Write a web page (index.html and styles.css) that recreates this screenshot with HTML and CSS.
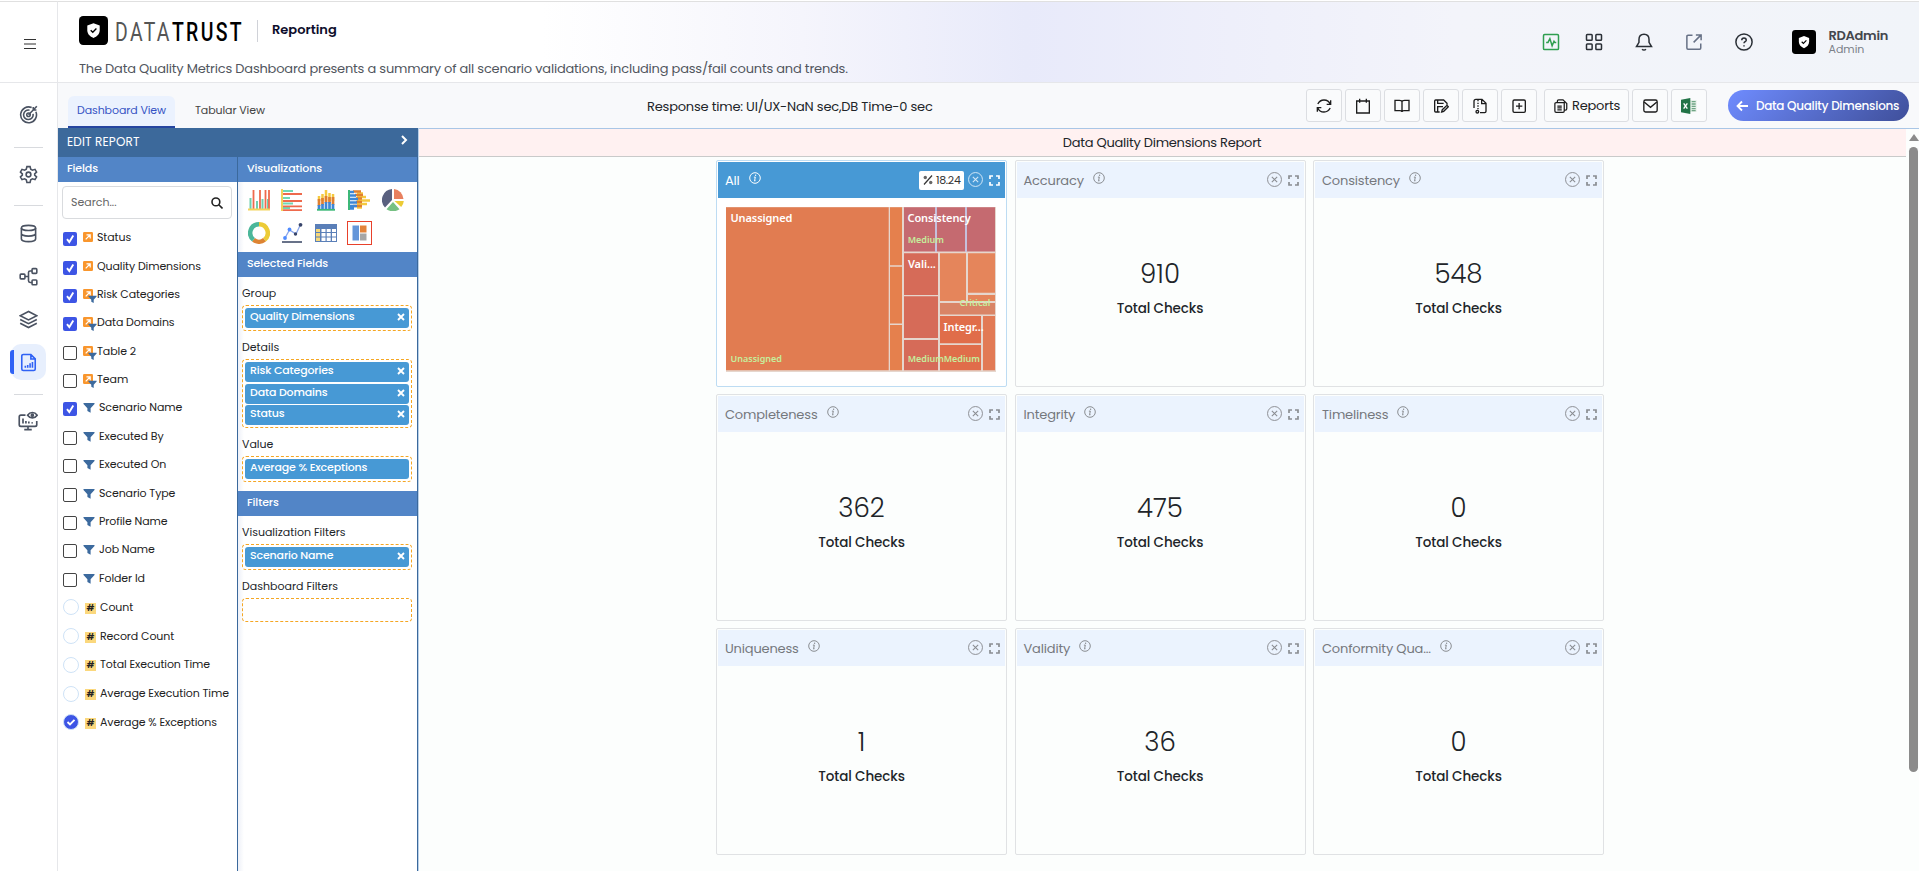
FILE: index.html
```
<!DOCTYPE html>
<html lang="en">
<head>
    <meta charset="UTF-8">
    <meta name="viewport" content="width=device-width, initial-scale=1.0">
    <title>Reporting - Data Quality Dimensions</title>
    <link rel="stylesheet" href="styles.css">
</head>
<body>

<!-- shared icons -->
<svg class="defs" width="0" height="0">
    <symbol id="i-shield" viewBox="0 0 28 28">
        <rect width="28" height="28" rx="4" fill="#000"/>
        <path d="M14 7l6 2.200v4.600c0 3.600-2.500 6-6 7.400-3.500-1.400-6-3.800-6-7.400V9.200z" fill="#fff"/>
        <path d="M11.300 13.700l2 2 3.500-3.700" fill="none" stroke="#000" stroke-width="1.300"/>
    </symbol>
    <symbol id="i-info" viewBox="0 0 12 12">
        <circle cx="6" cy="6" r="5.300" fill="none" stroke="currentColor" stroke-width="1"/>
        <path d="M6.300 5L5.600 8.800M4.900 5.200l1.400-.2M5.200 8.900l1.300-.2" fill="none" stroke="currentColor" stroke-width="1"/>
        <circle cx="6.600" cy="3.200" r=".7" fill="currentColor"/>
    </symbol>
    <symbol id="i-close" viewBox="0 0 14 14">
        <circle cx="7" cy="7" r="6.500" fill="none" stroke="currentColor" stroke-width=".9"/>
        <path d="M4.500 4.500l5 5M9.500 4.500l-5 5" stroke="currentColor" stroke-width="1"/>
    </symbol>
    <symbol id="i-expand" viewBox="0 0 11 11">
        <path d="M1 4V1h3M7 1h3v3M10 7v3H7M4 10H1V7" fill="none" stroke="currentColor" stroke-width="1.700"/>
    </symbol>
    <symbol id="i-funnel" viewBox="0 0 12 12">
        <path d="M.5 1h11v.9L7.600 6.200V10.800L4.400 9V6.200L.5 1.900z" fill="#3c6a9e"/>
    </symbol>
    <symbol id="i-link" viewBox="0 0 10 10">
        <rect width="10" height="10" rx="1.200" fill="#f9962d"/>
        <path d="M2.700 7.300L7 3M3.500 2.800H7.200V6.500" fill="none" stroke="#fff" stroke-width="1.200"/>
    </symbol>
    <symbol id="i-x" viewBox="0 0 8 8">
        <path d="M1 1l6 6M7 1L1 7" stroke="#fff" stroke-width="1.900"/>
    </symbol>
</svg>

<aside class="sidebar">
    <div class="menu-toggle">
        <svg width="14" height="12" viewBox="0 0 14 12" stroke="#333" stroke-width="1.200"><path d="M1 1.500h12M1 6h12M1 10.500h12"/></svg>
    </div>
    <nav class="side-nav">
        <a class="side-item first">
            <svg width="19" height="19" viewBox="0 0 24 24"><path d="M21.300 8.500A10 10 0 1 1 16 3.200M17.700 11.200A6 6 0 1 1 13.300 6.600"/><circle cx="12" cy="12.300" r="2.200"/><path d="M12 12.300l6-6M18 2.500v3.800h4M18 6.300L22.500 1.500"/></svg>
        </a>
        <hr>
        <a class="side-item">
            <svg width="19" height="19" viewBox="0 0 24 24"><path d="M10 2h4l.8 3.200 2.200 1.300 3.200-1 2 3.500-2.400 2.200v1.600l2.400 2.200-2 3.500-3.200-1-2.200 1.300L14 22h-4l-.8-3.200L7 17.500l-3.200 1-2-3.500 2.400-2.200v-1.600L1.800 9l2-3.500 3.200 1 2.200-1.300z"/><circle cx="12" cy="12" r="3"/></svg>
        </a>
        <hr>
        <a class="side-item db">
            <svg width="19" height="19" viewBox="0 0 24 24"><ellipse cx="12" cy="5" rx="9" ry="3.300"/><path d="M3 5v14c0 1.800 4 3.300 9 3.300s9-1.500 9-3.300V5M3 12c0 1.800 4 3.300 9 3.300s9-1.500 9-3.300"/></svg>
        </a>
        <a class="side-item">
            <svg width="19" height="19" viewBox="0 0 24 24"><rect x="1.500" y="9" width="6" height="6" rx="1"/><rect x="16.500" y="2" width="6" height="6" rx="1"/><rect x="16.500" y="16.500" width="6" height="6" rx="1"/><path d="M7.500 12H12M16.500 5h-2.500a2 2 0 0 0-2 2v10.500a2 2 0 0 0 2 2h2.500"/></svg>
        </a>
        <a class="side-item">
            <svg width="19" height="19" viewBox="0 0 24 24"><path d="M12 1.800L1.500 7.200 12 12.500l10.500-5.300zM1.500 12L12 17.300 22.500 12M1.500 16.800L12 22.200l10.500-5.400"/></svg>
        </a>
        <a class="side-item active">
            <svg width="19" height="19" viewBox="0 0 24 24"><path d="M15 1.800H5.500a2 2 0 0 0-2 2v16.400a2 2 0 0 0 2 2h13a2 2 0 0 0 2-2V7.500zM15 1.800v5.700h5.500M8 16v2.500M11 15v3.500M14 13v5.500M17 11.500v7"/></svg>
        </a>
        <hr>
        <a class="side-item last">
            <svg width="20" height="20" viewBox="0 0 24 24"><path d="M9 5H3.500a2 2 0 0 0-2 2v9.500a2 2 0 0 0 2 2h17a2 2 0 0 0 2-2V12M12 18.500V22M7.500 22.300h9M6 15V9M9.500 15v-3M13 15v-2.500M17 15v-1.500"/><path d="M11.500 5c3-4.300 8.500-4.300 11.500 0-3 4.300-8.500 4.300-11.500 0z"/><circle cx="17.200" cy="5" r="1.200"/></svg>
        </a>
    </nav>
</aside>

<div class="page">
    <header class="topbar">
        <div class="brand">
            <div class="brand-row">
                <svg width="29" height="29"><use href="#i-shield"/></svg>
                <svg class="wordmark" width="136" height="34">
                    <text x="1" y="27" textLength="129" lengthAdjust="spacingAndGlyphs"><tspan class="word-light">DATA</tspan><tspan class="word-dark">TRUST</tspan></text>
                </svg>
                <span class="module">Reporting</span>
            </div>
            <p class="description">The Data Quality Metrics Dashboard presents a summary of all scenario validations, including pass/fail counts and trends.</p>
        </div>
        <div class="top-icons">
            <svg class="health" width="18" height="18" viewBox="0 0 24 24"><rect x="2" y="2" width="20" height="20" rx="1.500"/><path d="M5.500 12.500H8l2.500-5 3 9.500 2.500-6 1 1.500h2"/></svg>
            <svg width="18" height="18" viewBox="0 0 24 24"><rect x="2" y="2" width="7.500" height="7.500" rx="1"/><rect x="14.500" y="2" width="7.500" height="7.500" rx="1"/><rect x="2" y="14.500" width="7.500" height="7.500" rx="1"/><rect x="14.500" y="14.500" width="7.500" height="7.500" rx="1"/></svg>
            <svg width="18" height="18" viewBox="0 0 24 24"><path d="M12 1.500c-4.300 0-6.700 3-6.700 7v4L2 18h20l-3.300-5.500v-4c0-4-2.400-7-6.700-7zM9.500 21.500c1 1.500 4 1.500 5 0"/></svg>
            <svg class="muted" width="18" height="18" viewBox="0 0 24 24"><path d="M10 3H4a1.500 1.500 0 0 0-1.500 1.500v15.500A1.500 1.500 0 0 0 4 21.500h15.500A1.500 1.500 0 0 0 21 20v-6M14.500 2.500H21.500V9.500M21.500 2.500L11.500 12.500"/></svg>
            <svg width="18" height="18" viewBox="0 0 24 24"><circle cx="12" cy="12" r="10.800"/><path d="M9 9.500c0-4 6-4 6 0 0 2-3 2.200-3 4.300M12 16.300v1.700"/></svg>
            <div class="user">
                <svg width="24" height="24"><use href="#i-shield"/></svg>
                <div>
                    <strong>RDAdmin</strong>
                    <small>Admin</small>
                </div>
            </div>
        </div>
    </header>

    <div class="toolbar">
        <div class="tabs">
            <a class="tab active">Dashboard View</a>
            <a class="tab">Tabular View</a>
        </div>
        <div class="response">Response time: UI/UX-NaN sec,DB Time-0 sec</div>
        <div class="tools">
            <button class="tool"><svg width="16" height="16" viewBox="0 0 24 24"><path d="M21.500 9.500C20 5.500 16.500 3 12 3 7.500 3 4.500 5.500 2.700 9M22 3.500v6h-6M2.500 14.500C4 18.500 7.500 21 12 21c4.500 0 7.500-2.500 9.300-6M2 20.500v-6h6"/></svg></button>
            <button class="tool"><svg width="16" height="16" viewBox="0 0 24 24"><path d="M2.500 4.500h19v18h-19zM7 1v6M17 1v6"/></svg></button>
            <button class="tool"><svg width="16" height="16" viewBox="0 0 24 24"><path d="M12 5.500C12 4.500 10 3.500 8 3.500H1.500v15.500H9c2 0 3 1 3 2 0-1 1-2 3-2h7.500V3.500H16c-2 0-4 1-4 2zM12 5.500V21"/></svg></button>
            <button class="tool"><svg width="16" height="16" viewBox="0 0 24 24"><path d="M10 21H4a1.500 1.500 0 0 1-1.500-1.500v-15A1.500 1.500 0 0 1 4 3h12l5 5v2M7 3v5h9M7 21v-8h8M13 21l1-3.500 7-6.500 2 2.200-7 6.800z"/></svg></button>
            <button class="tool"><svg width="16" height="16" viewBox="0 0 24 24"><path d="M12 22h7a2 2 0 0 0 2-2V8l-6-6H6a3 3 0 0 0-3 3v10M14.500 2v6.500H21M9 3v2M9 7v2M9 11v2M9 15v2"/><circle cx="8" cy="20.500" r="2"/></svg></button>
            <button class="tool"><svg width="16" height="16" viewBox="0 0 24 24"><rect x="3" y="3" width="18.500" height="18.500" rx="2"/><path d="M12.200 7.500v9.500M7.500 12.200H17"/></svg></button>
            <button class="tool reports"><svg width="15" height="16" viewBox="0 0 24 24"><path d="M18 6.500V20a2 2 0 0 1-2 2H5a2 2 0 0 1-2-2V8.500a2 2 0 0 1 2-2h8zM7 6V4a2 2 0 0 1 2-2h7l6 6v8.500a2 2 0 0 1-2 2h-1.500M7 12h7M7 15h7M7 18h7"/></svg>Reports</button>
            <button class="tool"><svg width="17" height="16" viewBox="0 0 24 24"><rect x="2" y="3" width="20" height="18" rx="2.500"/><path d="M2.500 6l9.500 8 9.500-8"/></svg></button>
            <button class="tool"><svg class="excel" width="16" height="16" viewBox="0 0 24 24"><rect x="11" y="3" width="12.500" height="18" fill="#e6f0e9"/><path d="M16 5.500h6M16 9h6M16 12.500h6M16 16h6M16 19h6" stroke="#6fa585" stroke-width="2"/><path d="M14 0v24L0 21.500v-19z" fill="#217346"/><path d="M4 8l5.500 8M9.500 8L4 16" stroke="#fff" stroke-width="2"/></svg></button>
            <button class="back"><svg width="13" height="12" viewBox="0 0 13 12"><path d="M6 1.500L1.500 6 6 10.500M1.500 6H12" fill="none" stroke="#fff" stroke-width="1.800"/></svg>Data Quality Dimensions</button>
        </div>
    </div>

    <div class="workspace">
        <section class="edit-panel">
            <div class="edit-title">EDIT REPORT
                <svg width="8" height="10" viewBox="0 0 8 10"><path d="M2 1l4 4-4 4" fill="none" stroke="#fff" stroke-width="2"/></svg>
            </div>
            <div class="edit-cols">
                <div class="fields-col">
                    <h3>Fields</h3>
                    <div class="search">Search...
                        <svg width="12" height="12" viewBox="0 0 12 12" fill="none" stroke="#222" stroke-width="1.600"><circle cx="4.900" cy="4.900" r="3.900"/><path d="M7.800 7.800L11.500 11.500"/></svg>
                    </div>
                    <ul class="fields" id="fields"></ul>
                    <ul class="measures" id="measures"></ul>
                </div>
                <div class="vis-col">
                    <h3>Visualizations</h3>
                    <div class="charts">
                        <svg viewBox="0 0 22 22"><path d="M2.500 9v11M9 12v8M14.500 10v10M20 10v10" stroke="#6fcfae" stroke-width="2"/><path d="M5.500 1v19M12 1v19M17.500 1v19M21 1v19" stroke="#ee6a4d" stroke-width="1.800"/><path d="M0 20.500h22" stroke="#f2d35b" stroke-width="2"/></svg>
                        <svg viewBox="0 0 22 22"><path d="M2 2h10M2 9h7M2 14.500h10M2 19h7" stroke="#6fd6b4" stroke-width="2"/><path d="M2 5h19M2 12h19M2 17.300h19M2 21.200h19" stroke="#ee6a4d" stroke-width="1.800"/><path d="M1 0v22" stroke="#f2d35b" stroke-width="2"/></svg>
                        <svg viewBox="0 0 22 22"><path d="M4 7v5M7.500 5v7M11 1v11M14.500 4v8M18 5v7" stroke="#f5c93f" stroke-width="2.500"/><path d="M4 10v7M7.500 9v7M11 7v7M14.500 8v6M18 8v8" stroke="#e07f2f" stroke-width="2.700"/><path d="M4 16v4M7.500 15v5M11 13v7M14.500 13v7M18 15v5" stroke="#3d86d6" stroke-width="2.700"/><path d="M2 20.800h18" stroke="#3cb878" stroke-width="1.800"/></svg>
                        <svg viewBox="0 0 22 22"><path d="M9 4.500h6M9 8h9M9 11.500h13M9 15h10M9 18.500h5" stroke="#f5c93f" stroke-width="2.500"/><path d="M5 2.500h8M7 6h8M8 9.500h6M8 13h6M5 17h9" stroke="#e07f2f" stroke-width="2.700"/><path d="M2 3h4M2 6.500h6M2 10h8M2 13.500h7M2 17h7M2 19.500h4" stroke="#3d86d6" stroke-width="2.500"/><path d="M1 1v20" stroke="#3cb878" stroke-width="2"/></svg>
                        <svg viewBox="0 0 22 22"><path d="M10 11L10 0A11 11 0 0 0 3 18.500z" fill="#59607f"/><path d="M12 10V0a11 11 0 0 1 9.500 10z" fill="#e8805f"/><path d="M12.500 12h9.300a10 10 0 0 1-2.600 6z" fill="#eccb36"/><path d="M11 13l6.500 7.200a11 11 0 0 1-13 0z" fill="#76c083"/></svg>
                        <svg viewBox="0 0 22 22" fill="none" stroke-width="4.500"><path d="M11 2.300A8.700 8.700 0 0 1 16.500 17.800" stroke="#eccb36"/><path d="M16.500 17.800A8.700 8.700 0 0 1 5.500 17.800" stroke="#dd8433"/><path d="M5.500 17.800A8.700 8.700 0 0 1 11 2.300" stroke="#4bb79a"/></svg>
                        <svg viewBox="0 0 22 22"><path d="M4 16L8.500 8l6.500 4L19.500 2.500" fill="none" stroke="#8aa6ea" stroke-width="1.300"/><circle cx="4" cy="16" r="1.900" fill="#4f8bff"/><circle cx="8.500" cy="7.500" r="1.900" fill="#4f8bff"/><circle cx="14.500" cy="12" r="1.700" fill="#38456b"/><circle cx="19.500" cy="2.800" r="1.900" fill="#38456b"/><path d="M1 20h20" stroke="#4d5974" stroke-width="1.700"/></svg>
                        <svg viewBox="0 0 22 22"><rect y="2" width="22" height="18" fill="#5a7fb8"/><path fill="#f6d879" d="M1 7h4v3H1zM1 11h4v3.500H1zM1 15.500h4v3.500H1z"/><path fill="#fff" d="M6.500 7h4v3h-4zM11.700 7h4v3h-4zM17 7h4v3h-4zM6.500 11h4v3.500h-4zM11.700 11h4v3.500h-4zM17 11h4v3.500h-4zM6.500 15.500h4v3.500h-4zM11.700 15.500h4v3.500h-4zM17 15.500h4v3.500h-4z"/></svg>
                        <svg class="picked" viewBox="0 0 23 22"><path fill="#6596d9" d="M4.500 3.500h6.500v15H4.500z"/><path fill="#e3833a" d="M12 3.500h6.500v7H12z"/><path fill="#a6a6a6" d="M12 11.500h6.500v7H12z"/></svg>
                    </div>
                    <h3>Selected Fields</h3>
                    <div class="slots">
                        <label>Group</label>
                        <div class="drop"><span class="chip">Quality Dimensions<svg><use href="#i-x"/></svg></span></div>
                        <label>Details</label>
                        <div class="drop"><span class="chip">Risk Categories<svg><use href="#i-x"/></svg></span><span class="chip">Data Domains<svg><use href="#i-x"/></svg></span><span class="chip">Status<svg><use href="#i-x"/></svg></span></div>
                        <label>Value</label>
                        <div class="drop"><span class="chip">Average % Exceptions</span></div>
                    </div>
                    <h3>Filters</h3>
                    <div class="slots">
                        <label>Visualization Filters</label>
                        <div class="drop"><span class="chip">Scenario Name<svg><use href="#i-x"/></svg></span></div>
                        <label>Dashboard Filters</label>
                        <div class="drop empty"></div>
                    </div>
                </div>
            </div>
        </section>

        <main class="report">
            <h2>Data Quality Dimensions Report</h2>
            <div class="cards" id="cards">
                <article class="card selected">
                    <div class="card-head">
                        <span class="card-title">All</span>
                        <svg class="info" width="12" height="12"><use href="#i-info"/></svg>
                        <span class="score"><svg width="10" height="10" viewBox="0 0 10 10"><path d="M1 9.500L9 .5" stroke="#333" stroke-width="1.200"/><circle cx="2.300" cy="2.500" r="1.700" fill="#666"/><circle cx="7.700" cy="7.500" r="1.700" fill="#666"/></svg>18.24</span>
                        <svg class="close" width="15" height="15"><use href="#i-close"/></svg>
                        <svg class="expand" width="11" height="11"><use href="#i-expand"/></svg>
                    </div>
                    <svg class="treemap" width="270" height="165" viewBox="0 0 270 165">
                        <rect width="270" height="165" fill="#e6d6cd"/>
                        <path fill="#c6c0dc" d="M209 0h2v45h-2zM239 0h2v45h-2z"/>
                        <path fill="#e17c51" d="M0 .3h162.700V163.300H0z"/>
                        <path fill="#e5804d" d="M164 .3h12V58.300H164zM164 59.700h12V116.500H164zM164 118h12V163.300H164z"/>
                        <path fill="#c56a70" d="M178 .3h31V44.500H178zM211 .3h28V44.500H211zM241 .3h28V44.500H241z"/>
                        <path fill="#d66b58" d="M178 46.300h34V88H178zM178 89.300h34V131H178zM178 133h34V163.300H178z"/>
                        <path fill="#e5855b" d="M214 46.300h26V94H214zM242 46.300h27V85.700H242zM242 88h27V94H242z"/>
                        <path fill="#d98466" d="M214 96h55V107.500H214z"/>
                        <path fill="#e06d4a" d="M214 109h41V136.300H214zM214 138h41V163.300H214z"/>
                        <path fill="#e27a55" d="M257 109h12V163.300H257z"/>
                        <g class="group-label">
                            <text x="4.500" y="14.700">Unassigned</text>
                            <text x="181.500" y="14.700">Consistency</text>
                            <text x="182" y="60.700">Vali...</text>
                            <text x="217.500" y="123.700">Integr...</text>
                        </g>
                        <g class="leaf-label">
                            <text x="4.500" y="155">Unassigned</text>
                            <text x="181.700" y="36">Medium</text>
                            <text x="233.500" y="99">Critical</text>
                            <text x="181.700" y="155">Medium</text>
                            <text x="217.700" y="155">Medium</text>
                        </g>
                    </svg>
                </article>
            </div>
        </main>
        <div class="scroll"><i></i><span></span></div>
    </div>
</div>

<script>
    const fields = [
        ["Status", "link", true],
        ["Quality Dimensions", "link", true],
        ["Risk Categories", "both", true],
        ["Data Domains", "both", true],
        ["Table 2", "both", false],
        ["Team", "both", false],
        ["Scenario Name", "funnel", true],
        ["Executed By", "funnel", false],
        ["Executed On", "funnel", false],
        ["Scenario Type", "funnel", false],
        ["Profile Name", "funnel", false],
        ["Job Name", "funnel", false],
        ["Folder Id", "funnel", false]
    ];
    const measures = ["Count", "Record Count", "Total Execution Time", "Average Execution Time", "Average % Exceptions"];
    const cards = [
        ["Accuracy", 910], ["Consistency", 548], ["Completeness", 362], ["Integrity", 475],
        ["Timeliness", 0], ["Uniqueness", 1], ["Validity", 36], ["Conformity Qua...", 0]
    ];
    const tick = '<svg viewBox="0 0 14 14"><path d="M4 7.200l2.300 2.800L10.300 3.500" fill="none" stroke="#fff" stroke-width="1.900"/></svg>';

    document.getElementById("fields").innerHTML = fields.map(([name, kind, on]) => {
        let icon = "";
        if (kind !== "funnel") icon += '<svg class="link-icon"><use href="#i-link"/></svg>';
        if (kind !== "link") icon += '<svg class="funnel-icon"><use href="#i-funnel"/></svg>';
        return `<li class="${kind}"><span class="box ${on ? "on" : ""}">${on ? tick : ""}</span><span class="kind">${icon}</span><span class="name">${name}</span></li>`;
    }).join("");

    document.getElementById("measures").innerHTML = measures.map((name, i) => {
        const on = i === measures.length - 1;
        return `<li><span class="dot ${on ? "on" : ""}">${on ? '<svg viewBox="0 0 14 14"><path d="M3.500 7l2.500 2.500L10.500 4.800" fill="none" stroke="#fff" stroke-width="1.900"/></svg>' : ""}</span><span class="hash">#</span><span class="name">${name}</span></li>`;
    }).join("");

    document.getElementById("cards").insertAdjacentHTML("beforeend", cards.map(([name, total]) => `
        <article class="card">
            <div class="card-head">
                <span class="card-title">${name}</span>
                <svg class="info" width="12" height="12"><use href="#i-info"/></svg>
                <svg class="close" width="15" height="15"><use href="#i-close"/></svg>
                <svg class="expand" width="11" height="11"><use href="#i-expand"/></svg>
            </div>
            <div class="total">${total}</div>
            <div class="caption">Total Checks</div>
        </article>`).join(""));
</script>

</body>
</html>
```
FILE: styles.css
```
* {
    box-sizing: border-box;
}
body {
    margin: 0;
    height: 871px;
    display: flex;
    overflow: hidden;
    border-top: 1px solid #fff;
    font-family: Poppins, Inter, "Open Sans", sans-serif;
    font-size: 14px;
    color: #212529;
    background-color: #fff;
}
h2, h3, p, ul {
    margin: 0;
    padding: 0;
    font-weight: 400;
}
svg {
    display: block;
    flex-shrink: 0;
}
.defs {
    position: absolute;
}

/* left rail */
.sidebar {
    width: 58px;
    border-top: 1px solid #e0e0e0;
    border-right: 1px solid #e6e7ea;
    flex-shrink: 0;
}
.menu-toggle {
    height: 81px;
    padding-top: 36px;
    padding-left: 23px;
    border-bottom: 1px solid #e6e7ea;
}
.side-nav {
    display: flex;
    flex-direction: column;
    align-items: center;
}
.side-nav hr {
    width: 29px;
    margin: 11px 0 6px;
    border: 0;
    border-top: 1px solid #d8dade;
}
.side-item {
    display: flex;
    align-items: center;
    justify-content: center;
    width: 35px;
    height: 40px;
    margin-right: 1px;
}
.side-item svg {
    fill: none;
    stroke: #4a5261;
    stroke-width: 2;
}
.side-item.first {
    height: 43px;
    margin-top: 10px;
}
.side-item.db {
    height: 43px;
}
.side-item + .side-item {
    height: 43px;
}
.side-item + .side-item.active {
    position: relative;
    height: 36px;
    margin: 3px 0 3px;
    background-color: #e7effd;
    border-radius: 10px;
}
.side-item.active::before {
    content: "";
    position: absolute;
    left: -1px;
    top: 6px;
    width: 4px;
    height: 24px;
    border-radius: 3px 0 0 3px;
    background-color: #2f62f5;
}
.side-item.active svg {
    stroke: #2f62f5;
}

/* header */
.page {
    flex: 1;
    display: flex;
    flex-direction: column;
    min-width: 0;
}
.topbar {
    height: 82px;
    display: flex;
    justify-content: space-between;
    border-top: 1px solid #e0e0e0;
    border-bottom: 1px solid #e6e7ea;
    background: linear-gradient(90deg, #fff 26%, #f5f5fc 40%, #e8eafa 52%, #eeeffa 63%, #f3f4fa 75%, #f1f4f9 100%);
}
.brand {
    padding: 14px 0 0 21px;
}
.brand-row {
    display: flex;
    align-items: center;
    height: 29px;
}
.wordmark {
    margin: 0 7px 0 6px;
    overflow: visible;
    font-family: Roboto, sans-serif;
    font-size: 25px;
    letter-spacing: 3px;
}
.word-light {
    fill: #555;
}
.word-dark {
    fill: #000;
    font-weight: 500;
}
.module {
    height: 22px;
    padding-left: 14px;
    border-left: 1px solid #d0d2d8;
    font-size: 13px;
    line-height: 20px;
    font-weight: 600;
    color: #0d0d2b;
}
.description {
    margin-top: 14px;
    font-size: 13px;
    line-height: 20px;
    color: #51565e;
    letter-spacing: -.2px;
}
.top-icons {
    display: flex;
    align-items: center;
    gap: 32px;
    padding-right: 31px;
}
.top-icons > svg {
    fill: none;
    stroke: #2a2f36;
    stroke-width: 2;
}
.top-icons > .health {
    margin-right: -7px;
    stroke: #2f9e4f;
}
.top-icons > .muted {
    stroke: #667085;
}
.user {
    display: flex;
    align-items: center;
    gap: 12px;
    margin-left: 7px;
}
.user strong, .user small {
    display: block;
    line-height: 14px;
    font-size: 13px;
    font-weight: 600;
    letter-spacing: -.3px;
    color: #44474d;
}
.user small {
    font-size: 11px;
    line-height: 12px;
    font-weight: 400;
    letter-spacing: 0;
    color: #7b8088;
}

/* toolbar */
.toolbar {
    position: relative;
    display: flex;
    justify-content: space-between;
    height: 46px;
    padding: 6px 10px 0;
    background-color: #f8f9fb;
    border-bottom: 1px solid #a9c6e6;
}
.tabs {
    display: flex;
    padding-top: 7px;
}
.tab {
    height: 32px;
    padding: 0 20px;
    font-size: 11px;
    line-height: 29px;
    letter-spacing: -.1px;
    color: #444;
}
.tab.active {
    width: 107px;
    padding: 0;
    text-align: center;
    border-radius: 6px 6px 0 0;
    border-bottom: 2px solid #2545a0;
    background-color: #ebf2fe;
    color: #3653c4;
}
.response {
    position: absolute;
    left: 589px;
    top: 15px;
    font-size: 13px;
    line-height: 18px;
    letter-spacing: -.2px;
}
.tools {
    display: flex;
    gap: 3px;
}
.tool {
    display: flex;
    align-items: center;
    justify-content: center;
    width: 36px;
    height: 33px;
    padding: 0;
    border: 1px solid #dcdee2;
    border-radius: 3px;
    background-color: #fafbfc;
    font: inherit;
    font-size: 13px;
    letter-spacing: -.2px;
    color: #222;
}
.tool svg {
    fill: none;
    stroke: #1c1c1c;
    stroke-width: 2;
}
.tool .excel {
    stroke: none;
}
.tool.reports {
    width: 85px;
    gap: 4px;
    margin-left: 4px;
}
.back {
    display: flex;
    align-items: center;
    gap: 7px;
    width: 181px;
    height: 31px;
    margin: 1px 0 0 18px;
    padding: 0 0 0 8px;
    border: 0;
    border-radius: 16px;
    background: linear-gradient(135deg, #6f8cff, #3f4f9a);
    font: inherit;
    font-size: 12px;
    font-weight: 500;
    letter-spacing: -.27px;
    color: #fff;
    white-space: nowrap;
}

/* edit report panel */
.workspace {
    flex: 1;
    display: flex;
    background-color: #fcfefd;
}
.edit-panel {
    display: flex;
    flex-direction: column;
    width: 360px;
    margin-top: -1px;
    z-index: 1;
    background-color: #fff;
    border-right: 1px solid #3b699c;
    box-shadow: 1px 0 0 #b9d0e8;
}
.edit-title {
    display: flex;
    justify-content: space-between;
    height: 29px;
    padding: 0 9px;
    background-color: #3c699b;
    color: #fff;
    font-size: 12px;
    line-height: 27px;
    letter-spacing: .15px;
}
.edit-title svg {
    margin-top: 7px;
}
.edit-cols {
    flex: 1;
    display: flex;
}
.fields-col {
    width: 180px;
    border-right: 1px solid #3b699c;
}
.vis-col {
    flex: 1;
    background: linear-gradient(90deg, #eef1f8, #fff 6px);
}
.edit-cols h3 {
    height: 25px;
    padding-left: 9px;
    background-color: #5285c7;
    color: #fff;
    font-size: 11px;
    line-height: 23px;
    font-weight: 500;
    letter-spacing: -.1px;
}
.search {
    display: flex;
    align-items: center;
    justify-content: space-between;
    width: 170px;
    height: 33px;
    margin: 4px 4px 6px;
    padding: 0 8px;
    border: 1px solid #d9dbde;
    border-radius: 4px;
    color: #666;
    font-size: 11px;
}
.fields, .measures {
    list-style: none;
    padding-left: 5px;
    font-size: 11px;
    letter-spacing: -.1px;
    color: #222;
}
.fields li {
    display: flex;
    align-items: center;
    height: 28.380px;
}
.box {
    width: 14px;
    height: 14px;
    border: 1px solid #444;
    border-radius: 2px;
}
.box.on {
    border: 0;
    background-color: #3d55e5;
}
.kind {
    position: relative;
    width: 20px;
    height: 14px;
    margin-left: 6px;
}
.link-icon {
    width: 10px;
    height: 10px;
}
.funnel-icon {
    width: 12px;
    height: 12px;
}
.both .funnel-icon {
    position: absolute;
    left: 5px;
    top: 6px;
    width: 9px;
    height: 9px;
}
.name {
    margin-top: -3px;
    margin-left: -6px;
    white-space: nowrap;
}
.funnel .name {
    margin-left: -4px;
}
.measures {
    margin-top: -1px;
}
.measures li {
    display: flex;
    align-items: center;
    height: 28.750px;
}
.dot {
    width: 16px;
    height: 16px;
    border: 1px solid #cfe3f7;
    border-radius: 50%;
}
.dot.on {
    background-color: #3d55e5;
}
.hash {
    width: 11px;
    height: 11px;
    margin: 2px 0 0 6px;
    background-color: #fbd87d;
    font-size: 9px;
    line-height: 11px;
    font-weight: 600;
    text-align: center;
}
.measures .name {
    margin-left: 4px;
    margin-top: 0;
}
.charts {
    display: grid;
    grid-template-columns: repeat(5, 22px);
    gap: 11px 11.400px;
    height: 70px;
    padding: 7px 10px;
    align-content: start;
}
.charts svg {
    width: 22px;
    height: 22px;
}
.charts .picked {
    width: 25px;
    height: 24px;
    margin: -1px;
    border: 1px solid #e8412b;
}
.slots {
    padding: 0 4px 9px;
}
.slots label {
    display: block;
    height: 15px;
    margin: 8px 0 5px;
    font-size: 11px;
    line-height: 17px;
}
.slots label:first-child {
    margin-top: 0;
    padding-top: 8px;
    height: 23px;
}
.drop {
    display: flex;
    flex-direction: column;
    gap: 1.500px;
    width: 170px;
    padding: 2px;
    border: 1px dashed #f5a623;
    border-radius: 4px;
}
.drop.empty {
    height: 24px;
}
.chip {
    display: flex;
    justify-content: space-between;
    height: 20px;
    padding: 0 4px 0 5px;
    border-radius: 3px;
    background-color: #4799d5;
    color: #fff;
    font-size: 11px;
    line-height: 17px;
    font-weight: 500;
    letter-spacing: -.15px;
}
.chip svg {
    width: 8px;
    height: 8px;
    margin-top: 5px;
}

/* report area */
.report {
    width: 1488px;
}
.report h2 {
    height: 28px;
    border-bottom: 1px solid #c9caca;
    background-color: #fff1f1;
    text-align: center;
    font-size: 13px;
    line-height: 27px;
    letter-spacing: -.25px;
}
.cards {
    display: grid;
    grid-template-columns: repeat(3, 291px);
    grid-auto-rows: 227px;
    justify-content: center;
    gap: 7px 7.500px;
    padding-top: 3px;
    padding-right: 4px;
}
.card {
    padding: 1px;
    border: 1px solid #e0e2e4;
    border-radius: 2px;
}
.card.selected {
    border-color: #bddcf3;
    background-color: #fff;
}
.card-head {
    display: flex;
    align-items: center;
    height: 36px;
    padding: 0 5px 0 7px;
    background-color: #ebf3fe;
    color: #8a8d92;
}
.card-title {
    padding-top: 2px;
    font-size: 13px;
    letter-spacing: -.17px;
    color: #75787d;
}
.info {
    margin: -5px auto 0 9px;
}
.close {
    margin: -1px 6px 0 0;
}
.selected .card-head {
    background-color: #4799d5;
    color: #d5e8f7;
}
.selected .card-title, .selected .expand, .selected .info {
    color: #fff;
}
.score {
    display: flex;
    align-items: center;
    gap: 3px;
    width: 45px;
    height: 19px;
    margin-right: 4px;
    padding-left: 4px;
    border-radius: 2px;
    background-color: #fff;
    color: #333;
    font-size: 11px;
    letter-spacing: -.3px;
}
.treemap {
    margin: 9px 0 0 8px;
}
.group-label {
    fill: #fff;
    font: 600 11px "Noto Sans", sans-serif;
    letter-spacing: -.1px;
}
.leaf-label {
    fill: #c5ef9d;
    font: 600 9px "Noto Sans", sans-serif;
}
.total {
    margin-top: 58px;
    text-align: center;
    font-size: 26px;
    line-height: 36px;
    font-weight: 300;
}
.caption {
    margin-top: 8px;
    text-align: center;
    font-size: 13.500px;
    line-height: 18px;
    font-weight: 500;
    letter-spacing: -.1px;
}
.scroll {
    width: 13px;
    padding: 5px 0 0 3px;
}
.scroll i {
    display: block;
    width: 0;
    border: 5px solid transparent;
    border-top: 0;
    border-bottom: 7px solid #8b8b8b;
}
.scroll span {
    display: block;
    width: 9px;
    height: 625px;
    margin-top: 6px;
    border-radius: 5px;
    background-color: #8b8b8b;
}
```
